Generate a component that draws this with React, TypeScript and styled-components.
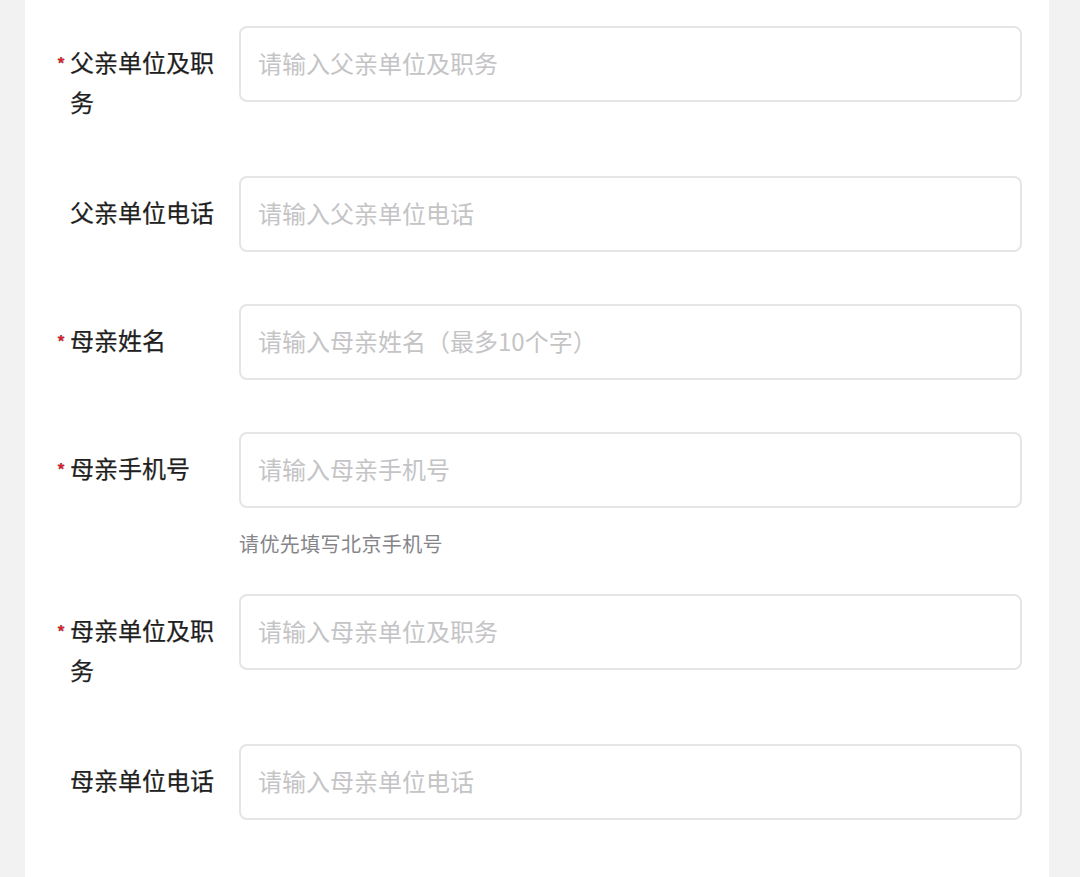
import React from "react";
import styled, { createGlobalStyle } from "styled-components";

const Global = createGlobalStyle`
  html, body {
    margin: 0;
    padding: 0;
    background: #f2f2f2;
    font-family: "Noto Sans CJK SC", "Noto Sans", sans-serif;
  }
  * { box-sizing: border-box; }
`;

const Page = styled.div`
  padding: 0 31px 0 25px;
  min-height: 877px;
  background: #f2f2f2;
`;

const Card = styled.div`
  width: 1024px;
  min-height: 877px;
  background: #ffffff;
  padding: 26px 27px 40px 31px;
`;

const Item = styled.div<{ $spacing: number }>`
  display: flex;
  align-items: flex-start;
  margin-bottom: ${(p) => p.$spacing}px;
`;

const Label = styled.div`
  position: relative;
  flex: 0 0 183px;
  padding: 16px 19px 0 14px;
  margin-bottom: 2px;
  font-size: 24px;
  line-height: 40px;
  color: #1f1f1f;
  -webkit-text-stroke: 0.25px #1f1f1f;
`;

const Star = styled.span`
  position: absolute;
  left: 1px;
  top: 17px;
  font-size: 16px;
  font-weight: 700;
  line-height: 40px;
  color: #ee1d2b;
`;

const Field = styled.div`
  flex: 1;
  display: flex;
  flex-direction: column;
`;

const Input = styled.input`
  width: 100%;
  height: 76px;
  border: 2px solid #e5e5e5;
  border-radius: 8px;
  padding: 0 17px 3px 17px;
  font-family: inherit;
  font-size: 24px;
  color: #222;
  background: #fff;
  outline: none;
  &::placeholder {
    color: #c4c4c6;
  }
`;

const Hint = styled.div`
  margin-top: 24px;
  font-size: 20px;
  line-height: 24px;
  color: #85858a;
  letter-spacing: 0.4px;
`;

type Row = {
  label: string;
  placeholder: string;
  required?: boolean;
  hint?: string;
};

const rows: Row[] = [
  { label: "父亲单位及职务", placeholder: "请输入父亲单位及职务", required: true },
  { label: "父亲单位电话", placeholder: "请输入父亲单位电话" },
  { label: "母亲姓名", placeholder: "请输入母亲姓名（最多10个字）", required: true },
  {
    label: "母亲手机号",
    placeholder: "请输入母亲手机号",
    required: true,
    hint: "请优先填写北京手机号",
  },
  { label: "母亲单位及职务", placeholder: "请输入母亲单位及职务", required: true },
  { label: "母亲单位电话", placeholder: "请输入母亲单位电话" },
];

export default function App() {
  return (
    <>
      <Global />
      <Page>
        <Card>
          {rows.map((r) => (
            <Item key={r.label} $spacing={r.hint ? 38 : 52}>
              <Label>
                {r.required && <Star>*</Star>}
                {r.label}
              </Label>
              <Field>
                <Input placeholder={r.placeholder} />
                {r.hint && <Hint>{r.hint}</Hint>}
              </Field>
            </Item>
          ))}
        </Card>
      </Page>
    </>
  );
}
